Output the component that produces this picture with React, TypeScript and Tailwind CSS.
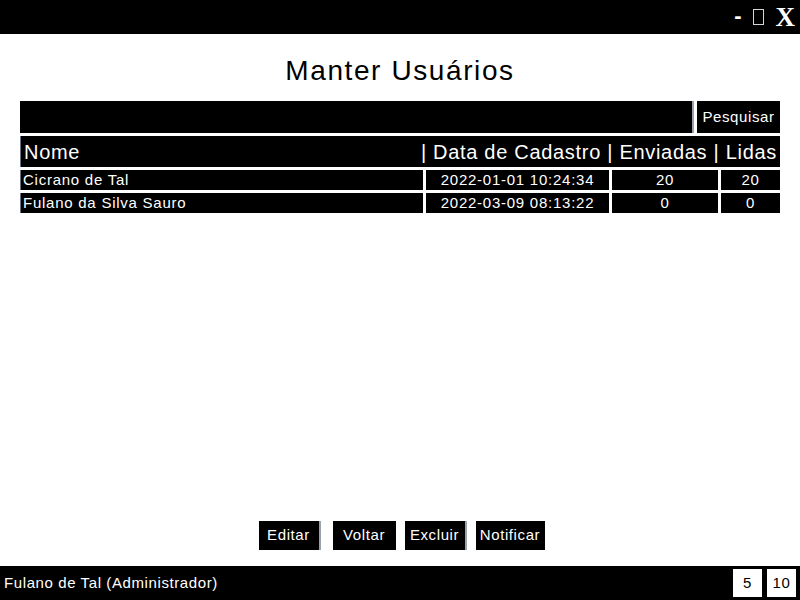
const rows = [
  { nome: "Cicrano de Tal", data: "2022-01-01 10:24:34", enviadas: 20, lidas: 20 },
  { nome: "Fulano da Silva Sauro", data: "2022-03-09 08:13:22", enviadas: 0, lidas: 0 },
];

const App = () => {
  return (
    <div className="flex flex-col h-[600px] w-[800px] bg-white font-['Liberation_Sans',Arial,sans-serif] text-white">
      <div className="flex items-center justify-end h-[34px] bg-black pr-[5px]">
        <span className="text-[22px] font-bold leading-none mb-[2px]">-</span>
        <span className="w-[11px] h-[16px] border border-gray-300 ml-[11px]"></span>
        <span className="text-[27px] font-bold leading-none font-['Liberation_Serif',serif] ml-[12px]">X</span>
      </div>

      <h1 className="text-black text-[28px] tracking-[1.6px] text-center mt-[20px] leading-[34px]">Manter Usuários</h1>

      <div className="flex mx-[20px] mt-[13px] h-[32px] gap-[3px]">
        <div className="flex-1 bg-black border-r-2 border-gray-400"></div>
        <button className="w-[83px] bg-black text-[15px] tracking-[0.6px]">Pesquisar</button>
      </div>

      <div className="flex items-center justify-between mx-[20px] mt-[3px] h-[31px] bg-black border-l border-gray-500 px-[3px] text-[20px] tracking-[0.7px]">
        <span>Nome</span>
        <span>| Data de Cadastro | Enviadas | Lidas</span>
      </div>

      <div className="flex flex-col mx-[20px] mt-[3px] gap-[3px]">
        {rows.map((r) => (
          <div key={r.nome} className="flex h-[20px] bg-black text-[15px] tracking-[0.75px] leading-[20px] border-l border-gray-500">
            <div className="w-[402px] pl-[2px]">{r.nome}</div>
            <div className="w-[186px] border-l-[3px] border-white text-center">{r.data}</div>
            <div className="w-[109px] border-l-[3px] border-white text-center">{r.enviadas}</div>
            <div className="flex-1 border-l-[3px] border-white text-center">{r.lidas}</div>
          </div>
        ))}
      </div>

      <div className="flex-1"></div>

      <div className="flex justify-center gap-[9px] mb-[16px] text-[15px] tracking-[0.6px] pl-[3px]">
        <button className="w-[62px] h-[29px] bg-black border-r-2 border-gray-400">Editar</button>
        <button className="w-[63px] h-[29px] bg-black ml-[3px]">Voltar</button>
        <button className="w-[62px] h-[29px] bg-black border-r-2 border-gray-400">Excluir</button>
        <button className="w-[69px] h-[29px] bg-black">Notificar</button>
      </div>

      <div className="flex items-center justify-between h-[34px] bg-black pl-[4px] pr-[4px]">
        <span className="text-[15px] tracking-[0.6px]">Fulano de Tal (Administrador)</span>
        <div className="flex gap-[5px]">
          <span className="w-[29px] h-[28px] bg-white text-black text-[15px] tracking-[0.6px] flex items-center justify-center">5</span>
          <span className="w-[29px] h-[28px] bg-white text-black text-[15px] tracking-[0.6px] flex items-center justify-center">10</span>
        </div>
      </div>
    </div>
  );
};

export default App;
